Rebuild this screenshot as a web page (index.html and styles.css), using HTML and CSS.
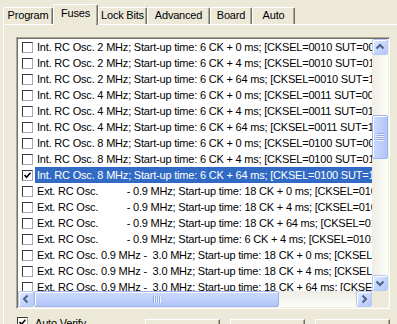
FILE: index.html
```html
<!DOCTYPE html>
<html>
<head>
<meta charset="utf-8">
<link rel="stylesheet" href="styles.css">
</head>
<body>
<div class="window">
  <div class="tabs">
    <div class="tab tab-program">Program</div>
    <div class="tab tab-active tab-fuses">Fuses</div>
    <div class="tab tab-lock">Lock Bits</div>
    <div class="tab tab-adv">Advanced</div>
    <div class="tab tab-board">Board</div>
    <div class="tab tab-auto">Auto</div>
  </div>
  <div class="page">
    <div class="listbox">
      <div class="list-main">
        <div class="rows">
          <div class="row"><span class="cb"></span><span class="label">Int. RC Osc. 2 MHz; Start-up time: 6 CK + 0 ms; [CKSEL=0010 SUT=00]</span></div>
          <div class="row"><span class="cb"></span><span class="label">Int. RC Osc. 2 MHz; Start-up time: 6 CK + 4 ms; [CKSEL=0010 SUT=01]</span></div>
          <div class="row"><span class="cb"></span><span class="label">Int. RC Osc. 2 MHz; Start-up time: 6 CK + 64 ms; [CKSEL=0010 SUT=10]</span></div>
          <div class="row"><span class="cb"></span><span class="label">Int. RC Osc. 4 MHz; Start-up time: 6 CK + 0 ms; [CKSEL=0011 SUT=00]</span></div>
          <div class="row"><span class="cb"></span><span class="label">Int. RC Osc. 4 MHz; Start-up time: 6 CK + 4 ms; [CKSEL=0011 SUT=01]</span></div>
          <div class="row"><span class="cb"></span><span class="label">Int. RC Osc. 4 MHz; Start-up time: 6 CK + 64 ms; [CKSEL=0011 SUT=10]</span></div>
          <div class="row"><span class="cb"></span><span class="label">Int. RC Osc. 8 MHz; Start-up time: 6 CK + 0 ms; [CKSEL=0100 SUT=00]</span></div>
          <div class="row"><span class="cb"></span><span class="label">Int. RC Osc. 8 MHz; Start-up time: 6 CK + 4 ms; [CKSEL=0100 SUT=01]</span></div>
          <div class="row row-selected"><span class="cb cb-checked"><svg viewBox="0 0 9 9" width="9" height="9"><polyline points="1.5,4 3.5,6.2 7.5,1.8" fill="none" stroke="#000" stroke-width="1.6"/></svg></span><span class="label">Int. RC Osc. 8 MHz; Start-up time: 6 CK + 64 ms; [CKSEL=0100 SUT=10]</span></div>
          <div class="row"><span class="cb"></span><span class="label">Ext. RC Osc.          - 0.9 MHz; Start-up time: 18 CK + 0 ms; [CKSEL=0101 SUT=00]</span></div>
          <div class="row"><span class="cb"></span><span class="label">Ext. RC Osc.          - 0.9 MHz; Start-up time: 18 CK + 4 ms; [CKSEL=0101 SUT=01]</span></div>
          <div class="row"><span class="cb"></span><span class="label">Ext. RC Osc.          - 0.9 MHz; Start-up time: 18 CK + 64 ms; [CKSEL=0101 SUT=10]</span></div>
          <div class="row"><span class="cb"></span><span class="label">Ext. RC Osc.          - 0.9 MHz; Start-up time: 6 CK + 4 ms; [CKSEL=0101 SUT=11]</span></div>
          <div class="row"><span class="cb"></span><span class="label">Ext. RC Osc. 0.9 MHz -  3.0 MHz; Start-up time: 18 CK + 0 ms; [CKSEL=0110 SUT=00]</span></div>
          <div class="row"><span class="cb"></span><span class="label">Ext. RC Osc. 0.9 MHz -  3.0 MHz; Start-up time: 18 CK + 4 ms; [CKSEL=0110 SUT=01]</span></div>
          <div class="row"><span class="cb"></span><span class="label">Ext. RC Osc. 0.9 MHz -  3.0 MHz; Start-up time: 18 CK + 64 ms; [CKSEL=0110 SUT=10]</span></div>
        </div>
        <div class="vscroll">
          <div class="sbtn"><svg viewBox="0 0 16 16" width="16" height="16"><polyline points="4.5,9.5 8,6 11.5,9.5" fill="none" stroke="#4D6185" stroke-width="2"/></svg></div>
          <div class="vtrack vtrack-top"></div>
          <div class="vthumb"><span class="vgrip"></span></div>
          <div class="vtrack vtrack-bottom"></div>
          <div class="sbtn"><svg viewBox="0 0 16 16" width="16" height="16"><polyline points="4.5,6.5 8,10 11.5,6.5" fill="none" stroke="#4D6185" stroke-width="2"/></svg></div>
        </div>
      </div>
      <div class="hbar">
        <div class="sbtn"><svg viewBox="0 0 16 16" width="16" height="16"><polyline points="9.5,4.5 6,8 9.5,11.5" fill="none" stroke="#4D6185" stroke-width="2"/></svg></div>
        <div class="hthumb"><span class="hgrip"></span></div>
        <div class="htrack"></div>
        <div class="sbtn"><svg viewBox="0 0 16 16" width="16" height="16"><polyline points="6.5,4.5 10,8 6.5,11.5" fill="none" stroke="#4D6185" stroke-width="2"/></svg></div>
        <div class="corner"></div>
      </div>
    </div>
    <div class="bottom">
      <div class="verify">
        <span class="cb cb-checked"><svg viewBox="0 0 9 9" width="9" height="9"><polyline points="1.5,4 3.5,6.2 7.5,1.8" fill="none" stroke="#000" stroke-width="1.6"/></svg></span>
        <span class="verify-label">Auto Verify</span>
      </div>
      <div class="buttons">
        <div class="btn">Verify</div>
        <div class="btn">Program</div>
        <div class="btn">Read</div>
      </div>
    </div>
  </div>
</div>
</body>
</html>
```
FILE: styles.css
```css
html, body {
  margin: 0;
  padding: 0;
}
body {
  width: 397px;
  height: 324px;
  overflow: hidden;
  background: #ECE9D8;
  font-family: "Liberation Sans", Arial, sans-serif;
  font-size: 11px;
  letter-spacing: -0.2px;
  color: #000;
}
.window {
  width: 420px;
}
.tabs {
  display: flex;
  align-items: flex-end;
  height: 24px;
  padding-left: 3px;
}
.tab {
  box-sizing: border-box;
  height: 17px;
  border-top: 1px solid #fff;
  border-left: 1px solid #fff;
  border-right: 1px solid #716F64;
  border-top-left-radius: 2px;
  border-top-right-radius: 2px;
  box-shadow: inset -1px 0 0 #ACA899;
  text-align: center;
  line-height: 15px;
  white-space: nowrap;
}
.tab-active {
  height: 21px;
  margin-bottom: -1px;
  position: relative;
  z-index: 1;
  background: #ECE9D8;
  line-height: 16px;
}
.tab-program { width: 50px; }
.tab-fuses { width: 45px; }
.tab-lock { width: 49px; }
.tab-adv { width: 63px; }
.tab-board { width: 42px; }
.tab-auto { width: 43px; }

.page {
  margin-left: 3px;
  border-top: 1px solid #fff;
  border-left: 1px solid #fff;
  padding: 12px 0 0 12px;
}
.listbox {
  width: 374px;
  height: 272px;
  box-sizing: border-box;
  border: 1px solid;
  border-color: #ACA899 #fff #fff #ACA899;
  box-shadow: inset 1px 1px 0 #716F64, inset -1px -1px 0 #F1EFE2;
  padding: 1px;
  background: #fff;
  display: flex;
  flex-direction: column;
}
.list-main {
  display: flex;
  height: 252px;
}
.rows {
  width: 354px;
  overflow: hidden;
  display: flex;
  flex-direction: column;
}
.row {
  display: flex;
  align-items: center;
  height: 16px;
  flex: none;
}
.cb {
  box-sizing: border-box;
  width: 11px;
  height: 11px;
  flex: none;
  border: 1px solid;
  border-color: #3A3A3A #A8A8A8 #A8A8A8 #3A3A3A;
  background: #fff;
  display: flex;
  align-items: center;
  justify-content: center;
}
.row .cb {
  margin-left: 4px;
}
.label {
  margin-left: 2px;
  padding: 0 2px;
  flex: 1 0 auto;
  line-height: 16px;
  height: 16px;
  white-space: pre;
}
.row-selected .label {
  background: #316AC5;
  color: #fff;
}
.vscroll {
  width: 16px;
  display: flex;
  flex-direction: column;
  background: linear-gradient(to right, #EEEDE5, #FDFDFA);
}
.sbtn {
  box-sizing: border-box;
  width: 16px;
  height: 16px;
  flex: none;
  border: 1px solid #B7CAF5;
  border-radius: 2px;
  background: linear-gradient(135deg, #E3EBFE 0%, #C6D6FC 50%, #B4C8F7 100%);
  box-shadow: inset 1px 1px 0 #fff;
  display: flex;
  align-items: center;
  justify-content: center;
}
.sbtn svg {
  margin: -1px;
}
.vtrack-top { height: 60px; }
.vtrack-bottom { flex: 1; }
.vthumb {
  box-sizing: border-box;
  height: 44px;
  border: 1px solid #9DB5EE;
  border-radius: 2px;
  background: linear-gradient(to right, #CCDAFD, #BCCEF9 60%, #B0C4F5);
  box-shadow: inset 1px 1px 0 #fff;
  display: flex;
  align-items: center;
  justify-content: center;
}
.vgrip {
  width: 7px;
  height: 8px;
  background: repeating-linear-gradient(to bottom, #8DA9E6 0 1px, #EEF3FF 1px 2px);
}
.hbar {
  display: flex;
  height: 16px;
  background: linear-gradient(to bottom, #EEEDE5, #FDFDFA);
}
.hthumb {
  box-sizing: border-box;
  width: 245px;
  height: 16px;
  border: 1px solid #9DB5EE;
  border-radius: 2px;
  background: linear-gradient(to bottom, #CCDAFD, #BCCEF9 60%, #B0C4F5);
  box-shadow: inset 1px 1px 0 #fff;
  display: flex;
  align-items: center;
  justify-content: center;
}
.hgrip {
  width: 8px;
  height: 7px;
  background: repeating-linear-gradient(to right, #8DA9E6 0 1px, #EEF3FF 1px 2px);
}
.htrack { flex: 1; }
.corner {
  width: 16px;
  height: 16px;
  background: #ECE9D8;
}
.bottom {
  display: flex;
  align-items: flex-start;
  width: 374px;
  margin-top: 8px;
}
.verify {
  display: flex;
  align-items: center;
  margin-left: 1px;
  height: 11px;
}
.verify-label {
  margin-left: 7px;
}
.buttons {
  margin-left: auto;
  margin-top: 2px;
  display: flex;
  gap: 10px;
}
.btn {
  box-sizing: border-box;
  width: 75px;
  height: 23px;
  border: 1px solid;
  border-color: #fff #716F64 #716F64 #fff;
  box-shadow: inset -1px -1px 0 #ACA899;
  text-align: center;
  line-height: 20px;
}
```
